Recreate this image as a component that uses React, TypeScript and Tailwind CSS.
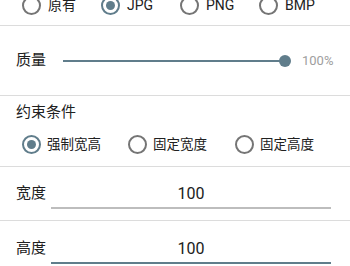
import { useState } from "react";

const font = { fontFamily: "Roboto, 'Noto Sans CJK SC', sans-serif" };

function Radio({ checked }: { checked: boolean }) {
  return (
    <div
      className={`w-[19px] h-[19px] rounded-full border-2 flex items-center justify-center shrink-0 ${
        checked ? "border-[#607d8b]" : "border-[#757575]"
      }`}
    >
      {checked && <div className="w-[9px] h-[9px] rounded-full bg-[#607d8b]" />}
    </div>
  );
}

export default function App() {
  const [format, setFormat] = useState("JPG");
  const [mode, setMode] = useState("强制宽高");

  const formats = ["原有", "JPG", "PNG", "BMP"];
  const modes = [
    { label: "强制宽高", w: "w-[106px]" },
    { label: "固定宽度", w: "w-[107px]" },
    { label: "固定高度", w: "w-[107px]" },
  ];

  return (
    <div className="w-[350px] h-[266px] overflow-hidden bg-white text-[#212121]" style={font}>
      {/* output format */}
      <div className="-mt-[14px] h-[40px] flex items-center pl-[22px] border-b border-[#dcdcdc]">
        {formats.map((f) => (
          <button key={f} onClick={() => setFormat(f)} className="w-[79px] flex items-center gap-[7px] text-[14px]">
            <Radio checked={format === f} />
            <span>{f}</span>
          </button>
        ))}
      </div>

      {/* quality */}
      <div className="h-[70px] flex items-center pl-4 border-b border-[#dcdcdc]">
        <span className="text-[15px] w-[47px]">质量</span>
        <div className="relative w-[228px] h-[12px] flex items-center">
          <div className="w-[222px] h-[2px] bg-[#607d8b]" />
          <div className="absolute left-[216px] top-0 w-[12px] h-[12px] rounded-full bg-[#607d8b]" />
        </div>
        <span className="ml-[11px] text-[13px] text-[#9e9e9e]">100%</span>
      </div>

      {/* constraints */}
      <div className="pt-[6px] pb-[8px] border-b border-[#dcdcdc]">
        <div className="pl-4 h-[20px] leading-[20px] text-[15px]">约束条件</div>
        <div className="mt-[8px] h-[28px] flex items-center pl-[22px]">
          {modes.map((m) => (
            <button key={m.label} onClick={() => setMode(m.label)} className={`${m.w} flex items-center gap-[6px] text-[13.5px]`}>
              <Radio checked={mode === m.label} />
              <span>{m.label}</span>
            </button>
          ))}
        </div>
      </div>

      {/* width */}
      <div className="h-[54px] flex items-center pl-4 pr-[19px] border-b border-[#dcdcdc]">
        <span className="w-[35px] text-[15px]">宽度</span>
        <div className="flex-1 mt-[3px] h-[28px] border-b-2 border-[#bdbdbd] flex items-center justify-center text-[16px]">
          100
        </div>
      </div>

      {/* height */}
      <div className="h-[54px] flex items-center pl-4 pr-[19px]">
        <span className="w-[35px] text-[15px]">高度</span>
        <div className="flex-1 mt-[3px] h-[28px] border-b-2 border-[#607d8b] flex items-center justify-center text-[16px]">
          100
        </div>
      </div>
    </div>
  );
}
